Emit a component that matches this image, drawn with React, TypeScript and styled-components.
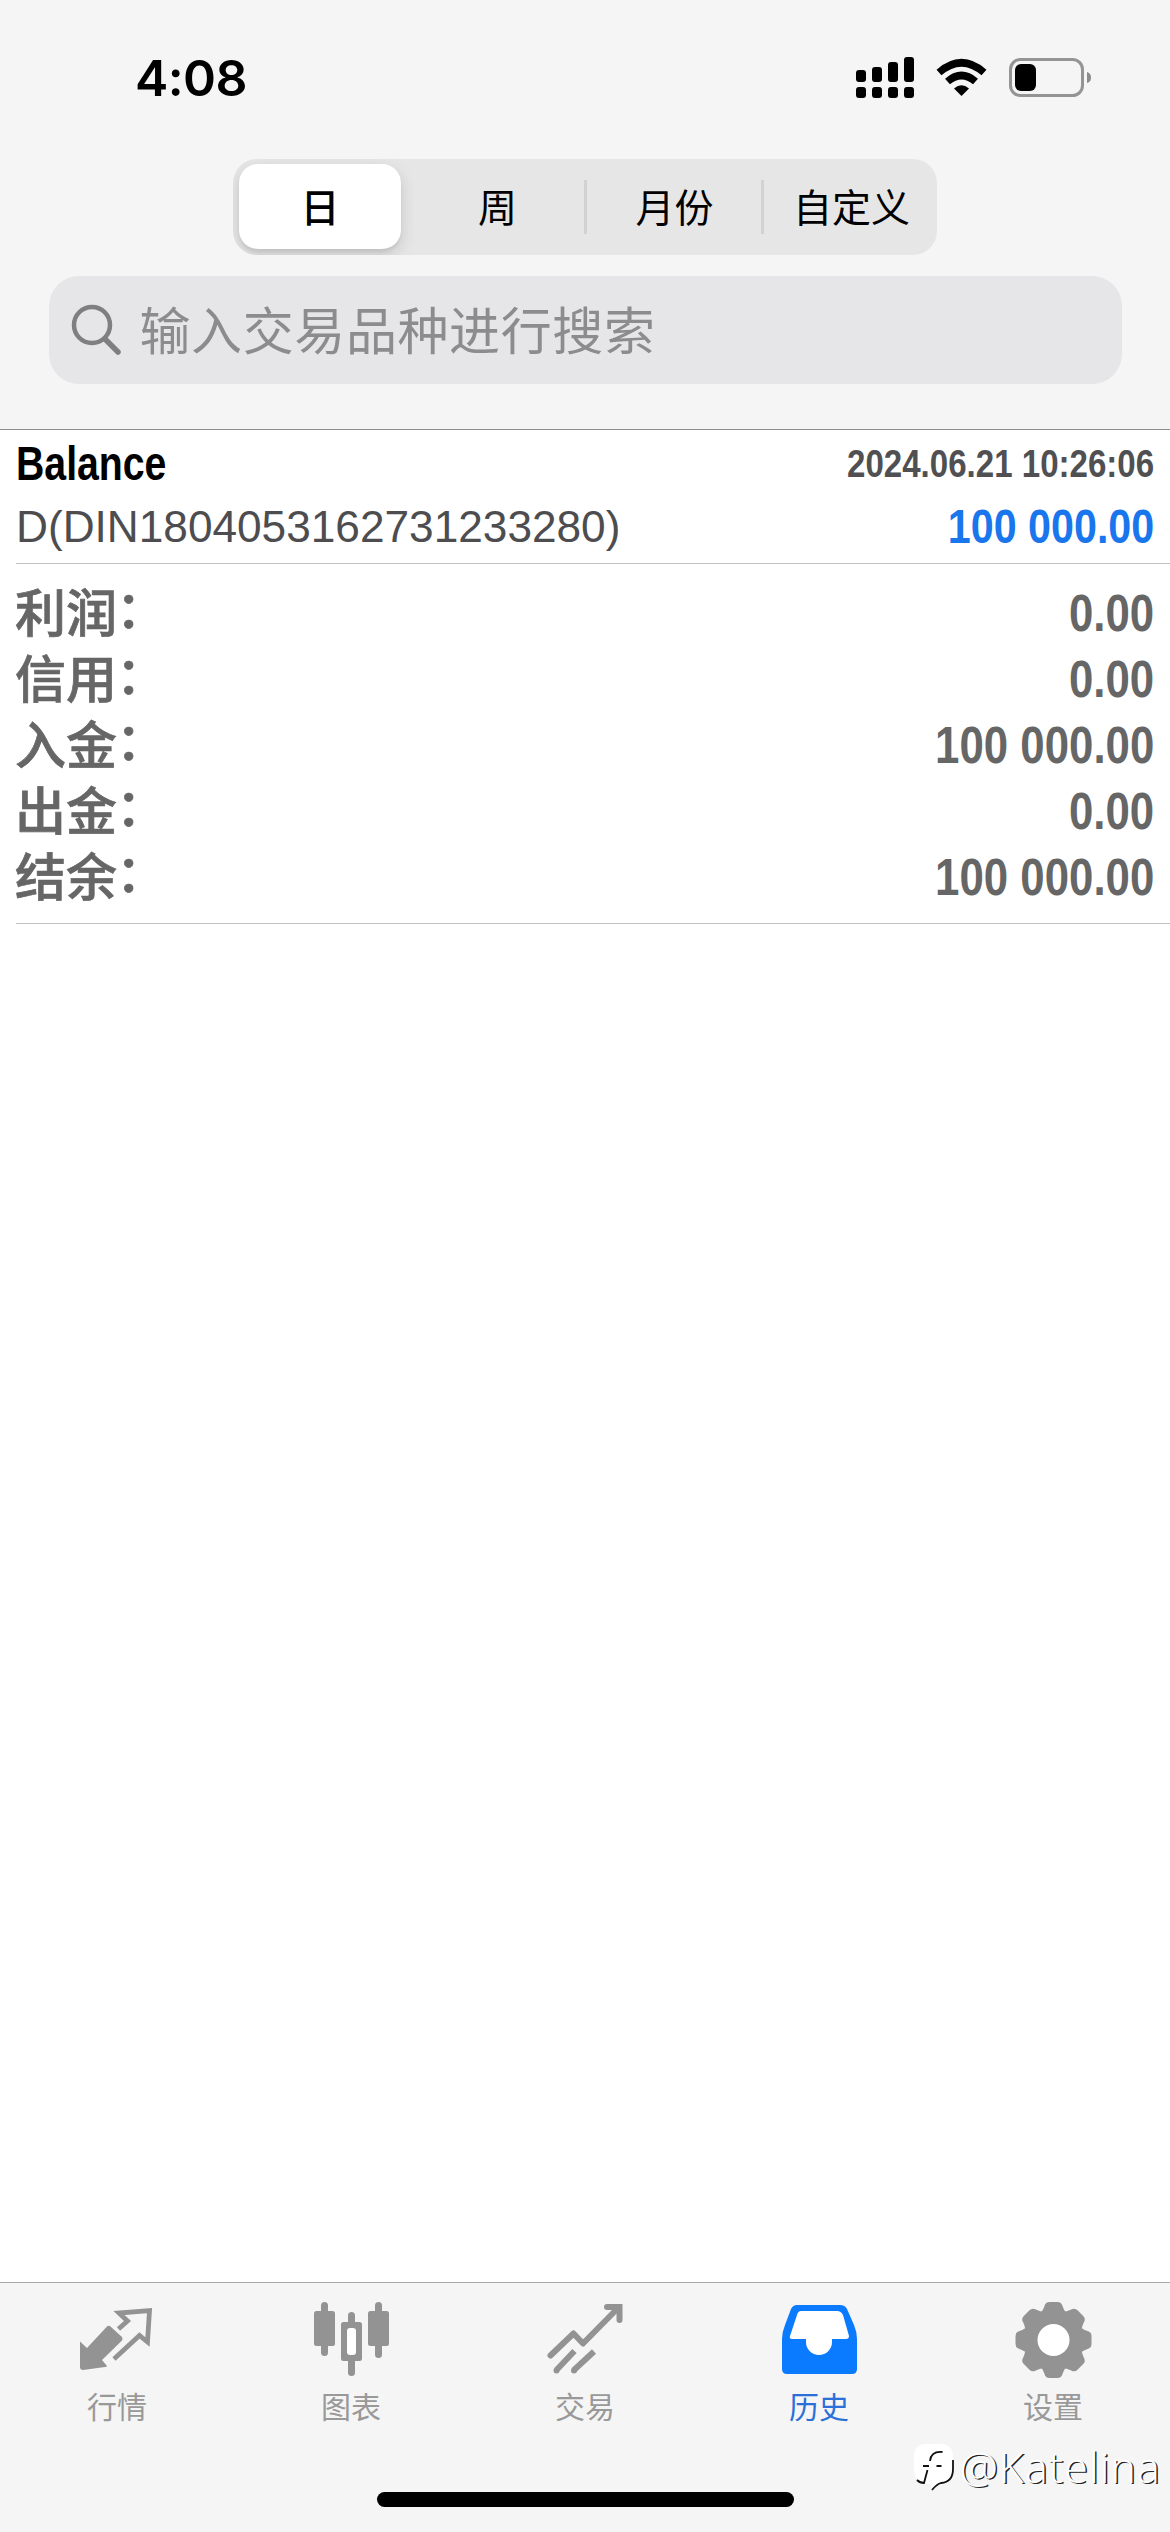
import React from 'react';
import styled, { createGlobalStyle } from 'styled-components';

const latin = "'Liberation Sans', 'Noto Sans CJK SC', sans-serif";
const cjk = "'Noto Sans CJK SC', sans-serif";

const GlobalStyle = createGlobalStyle`
  * { box-sizing: border-box; }
  body { margin: 0; background: #fff; }
`;

const Screen = styled.div`
  width: 1170px;
  height: 2532px;
  display: flex;
  flex-direction: column;
  overflow: hidden;
  background: #fff;
  font-family: ${latin};
`;

const Header = styled.header`
  height: 430px;
  display: flex;
  flex-direction: column;
  align-items: center;
  background: #f5f5f5;
  border-bottom: 1px solid #8e8e8e;
`;

const StatusBar = styled.div`
  width: 100%;
  height: 159px;
  padding: 0 78px 0 135px;
  display: flex;
  align-items: flex-start;
  justify-content: space-between;
`;

const Clock = styled.div`
  margin-top: 48px;
  font: 600 50px/60px Inter, sans-serif;
  letter-spacing: -0.6px;
  color: #000;
`;

const StatusIcons = styled.svg`
  margin-top: 50px;
  width: 250px;
  height: 60px;
`;

const Segments = styled.div`
  width: 704px;
  height: 96px;
  padding: 5px 0 6px 6px;
  display: flex;
  border-radius: 24px;
  background: #e6e6e6;
  overflow: hidden;
`;

const Segment = styled.button<{ $active?: boolean; $divided?: boolean }>`
  flex: none;
  width: ${p => (p.$active ? 162 : 177)}px;
  margin-right: ${p => (p.$active ? 8 : 0)}px;
  border: 0;
  padding: 0 0 4px;
  display: flex;
  align-items: center;
  justify-content: center;
  position: relative;
  border-radius: ${p => (p.$active ? 19 : 0)}px;
  background: ${p => (p.$active ? '#fff' : 'transparent')};
  box-shadow: ${p => (p.$active ? '0 6px 16px rgba(0,0,0,.14), 0 3px 3px rgba(0,0,0,.05)' : 'none')};
  font: ${p => (p.$active ? 500 : 400)} 39px/48px ${cjk};
  color: #000;
  &::before {
    content: '';
    display: ${p => (p.$divided ? 'block' : 'none')};
    position: absolute;
    left: -2px;
    top: 16px;
    width: 3px;
    height: 54px;
    background: #d2d2d3;
  }
`;

const SearchField = styled.div`
  width: 1073px;
  height: 108px;
  margin-top: 21px;
  padding: 0 22px;
  display: flex;
  align-items: center;
  gap: 15px;
  border-radius: 30px;
  background: #e6e6e8;
`;

const SearchIcon = styled.svg`
  width: 54px;
  height: 54px;
`;

const Placeholder = styled.span`
  font: 400 51px/70px ${cjk};
  letter-spacing: 0.6px;
  color: #8c8c8e;
  margin-top: -4px;
`;

const Deal = styled.section`
  height: 134px;
  margin-left: 16px;
  padding: 7px 16px 0 0;
  border-bottom: 1px solid #c0c0c0;
`;

const Line = styled.div<{ $height: number }>`
  height: ${p => p.$height}px;
  display: flex;
  align-items: center;
  justify-content: space-between;
`;

const Text = styled.span<{ $size: number; $scale: number; $color: string; $bold?: boolean; $end?: boolean }>`
  font-size: ${p => p.$size}px;
  font-weight: ${p => (p.$bold ? 700 : 400)};
  line-height: 1.1;
  color: ${p => p.$color};
  white-space: nowrap;
  transform: scaleX(${p => p.$scale});
  transform-origin: ${p => (p.$end ? 'right' : 'left')} center;
`;

const Summary = styled.section`
  height: 360px;
  margin-left: 16px;
  padding: 17px 16px 0 0;
  border-bottom: 1px solid #c0c0c0;
`;

const Label = styled.span`
  font: 500 51px/56px ${cjk};
  color: #666;
  -webkit-text-stroke: 0.7px #666;
  margin: -9px 0 0 -1px;
`;

const Colon = styled.span`
  display: inline-block;
  transform: translate(-1px, -4px);
`;

const Empty = styled.main`
  flex: 1;
`;

const TabBar = styled.nav`
  height: 250px;
  border-top: 1px solid #a9a9a9;
  background: #f5f5f5;
  display: grid;
  grid-template-columns: repeat(5, 234px);
  grid-template-rows: 190px auto;
  position: relative;
`;

const Tab = styled.a<{ $active?: boolean }>`
  display: flex;
  flex-direction: column;
  align-items: center;
  padding-top: 12px;
  color: ${p => (p.$active ? '#0a7aff' : '#939393')};
  svg { width: 90px; height: 90px; }
  span {
    margin-top: -2px;
    font: 400 30px/44px ${cjk};
    color: ${p => (p.$active ? '#2b70d8' : '#999')};
  }
`;

const HomeIndicator = styled.div`
  grid-column: 1 / -1;
  justify-self: center;
  margin-top: 19px;
  width: 417px;
  height: 15px;
  border-radius: 8px;
  background: #000;
`;

const Watermark = styled.div`
  position: absolute;
  right: 9px;
  top: 155px;
  display: flex;
  align-items: center;
  gap: 5px;
  font: 300 43px/58px 'Open Sans', sans-serif;
  letter-spacing: 1.1px;
  color: #fff;
  text-shadow: 1.5px 1.2px 0 #222;
  svg { width: 42px; height: 50px; }
`;

const QuotesIcon = () => (
  <svg viewBox="0 0 90 90">
    <path d="M8 44.5 15 51 35 29.500Q37 28 39 30L50 40Q51 42 50 43.5L30 63 35 69Q35 70 33 70L11 73Q8 73 8 70Z" transform="translate(0 2)" fill="currentColor" />
    <path d="M46.500 34 55.500 26 47 18 77.500 15.700 75.500 47 67.500 40.500 42 64" fill="none" stroke="currentColor" strokeWidth="4.800" />
  </svg>
);

const ChartIcon = () => (
  <svg viewBox="0 0 90 90" fill="currentColor">
    <rect x="15" y="7" width="7" height="54" rx="3.500" />
    <rect x="8" y="16" width="21" height="35" rx="2.500" />
    <rect x="69" y="7" width="7" height="56" rx="3.500" />
    <rect x="62" y="16" width="21" height="35" rx="2.500" />
    <rect x="42" y="17" width="7" height="64" rx="3.500" />
    <rect x="35" y="27" width="21" height="39" rx="2.500" />
    <rect x="41" y="33" width="9" height="27" rx="3" fill="#fff" />
  </svg>
);

const TradeIcon = () => (
  <svg viewBox="0 0 90 90" fill="none" stroke="currentColor" strokeWidth="6">
    <path d="M10.500 60.500 33.500 38.500 43 48.500 78 13" strokeLinecap="round" strokeLinejoin="round" />
    <path d="M67 12H79.500V25" strokeLinecap="round" />
    <path d="M34.500 56 16.500 75M54 56.500 34 75" />
    <circle cx="16.500" cy="75.500" r="3" fill="currentColor" stroke="none" />
    <circle cx="34" cy="75.500" r="3" fill="currentColor" stroke="none" />
  </svg>
);

const HistoryIcon = () => (
  <svg viewBox="0 0 90 90">
    <path d="M23 10H66Q71 10 73 14L80 30Q83 37 83 44V74Q83 79 78 79H13Q8 79 8 74V44Q8 37 11 30L17 14Q19 10 23 10Z" fill="currentColor" />
    <path d="M27 16H63Q67 16 69 20L75 41Q75 44 72 44H58V47A13 13 0 0 1 32 47V44H18Q15 44 16 41L23 20Q24 16 27 16Z" fill="#fff" />
  </svg>
);

const SettingsIcon = () => (
  <svg viewBox="-45.5 -45 90 90">
    <g fill="currentColor">
      <circle r="30" />
      {[0, 45, 90, 135, 180, 225, 270, 315].map(a => (
        <path key={a} transform={`rotate(${a})`} d="M-15-25Q-11-28-9-34Q-8-38-4-38H4Q8-38 9-34Q11-28 15-25L8-15H-8Z" />
      ))}
    </g>
    <circle r="16" fill="#fff" />
  </svg>
);

const tabs = [
  { label: '行情', icon: <QuotesIcon /> },
  { label: '图表', icon: <ChartIcon /> },
  { label: '交易', icon: <TradeIcon /> },
  { label: '历史', icon: <HistoryIcon />, active: true },
  { label: '设置', icon: <SettingsIcon /> },
];

const totals = [
  ['利润', '0.00'],
  ['信用', '0.00'],
  ['入金', '100 000.00'],
  ['出金', '0.00'],
  ['结余', '100 000.00'],
];

export default function App() {
  return (
    <Screen>
      <GlobalStyle />
      <Header>
        <StatusBar>
          <Clock>4:08</Clock>
          <StatusIcons viewBox="842 50 250 60">
            {[856, 872, 888, 904].map((x, i) => (
              <React.Fragment key={x}>
                <rect x={x} y={[70, 67, 62, 57][i]} width="10" height={[12, 15, 20, 25][i]} rx="3" />
                <rect x={x} y="87" width="10" height="11" rx="3" />
              </React.Fragment>
            ))}
            <g fill="none" stroke="#000" strokeWidth="7.500">
              <path d="M939 72.500Q961.500 53 984 72.500" />
              <path d="M947.500 81.500Q961.500 69.500 975.500 81.500" />
            </g>
            <path d="M954 88.500Q961.500 82 969 88.500L961.500 96Z" />
            <rect x="1010.500" y="59.500" width="72" height="36" rx="10" fill="none" stroke="#949494" strokeWidth="3" />
            <rect x="1015" y="64" width="21" height="27" rx="6" />
            <path d="M1087 72Q1091 73 1091 77.500T1087 83Z" fill="#8c8c8c" />
          </StatusIcons>
        </StatusBar>
        <Segments>
          <Segment $active>日</Segment>
          <Segment>周</Segment>
          <Segment $divided>月份</Segment>
          <Segment $divided>自定义</Segment>
        </Segments>
        <SearchField>
          <SearchIcon viewBox="0 0 54 54" fill="none" stroke="#7f7f81" strokeLinecap="round">
            <circle cx="21" cy="22" r="18" strokeWidth="4.500" />
            <path d="M34 36 47 49" strokeWidth="5.500" />
          </SearchIcon>
          <Placeholder>输入交易品种进行搜索</Placeholder>
        </SearchField>
      </Header>
      <Deal>
        <Line $height={54}>
          <Text $size={48} $scale={0.817} $color="#000" $bold>Balance</Text>
          <Text $size={39} $scale={0.848} $color="#505052" $bold $end>2024.06.21 10:26:06</Text>
        </Line>
        <Line $height={72}>
          <Text $size={45} $scale={0.982} $color="#4d4d4f">D(DIN1804053162731233280)</Text>
          <Text $size={49} $scale={0.842} $color="#1976ec" $bold $end>100 000.00</Text>
        </Line>
      </Deal>
      <Summary>
        {totals.map(([name, value]) => (
          <Line key={name} $height={66}>
            <Label>{name}<Colon>：</Colon></Label>
            <Text $size={52} $scale={0.842} $color="#666" $bold $end>{value}</Text>
          </Line>
        ))}
      </Summary>
      <Empty />
      <TabBar>
        {tabs.map(t => (
          <Tab key={t.label} $active={t.active}>
            {t.icon}
            <span>{t.label}</span>
          </Tab>
        ))}
        <HomeIndicator />
        <Watermark>
          <svg viewBox="0 0 42 50">
            <path d="M13 2H27Q40 2 40 15V27Q40 41 28 41Q25 42 19 48L17 42H12Q1 40 1 27V15Q1 2 13 2Z" fill="#fff" />
            <path d="M29.500 10Q18 9 17 19M10 24H16M23.500 24H28.500M14.500 28 11 41Q7 41 4 38M40 18V27Q40 40 28 41Q24 42 19 48" fill="none" stroke="#111" strokeWidth="1.800" />
          </svg>
          @Katelina
        </Watermark>
      </TabBar>
    </Screen>
  );
}
